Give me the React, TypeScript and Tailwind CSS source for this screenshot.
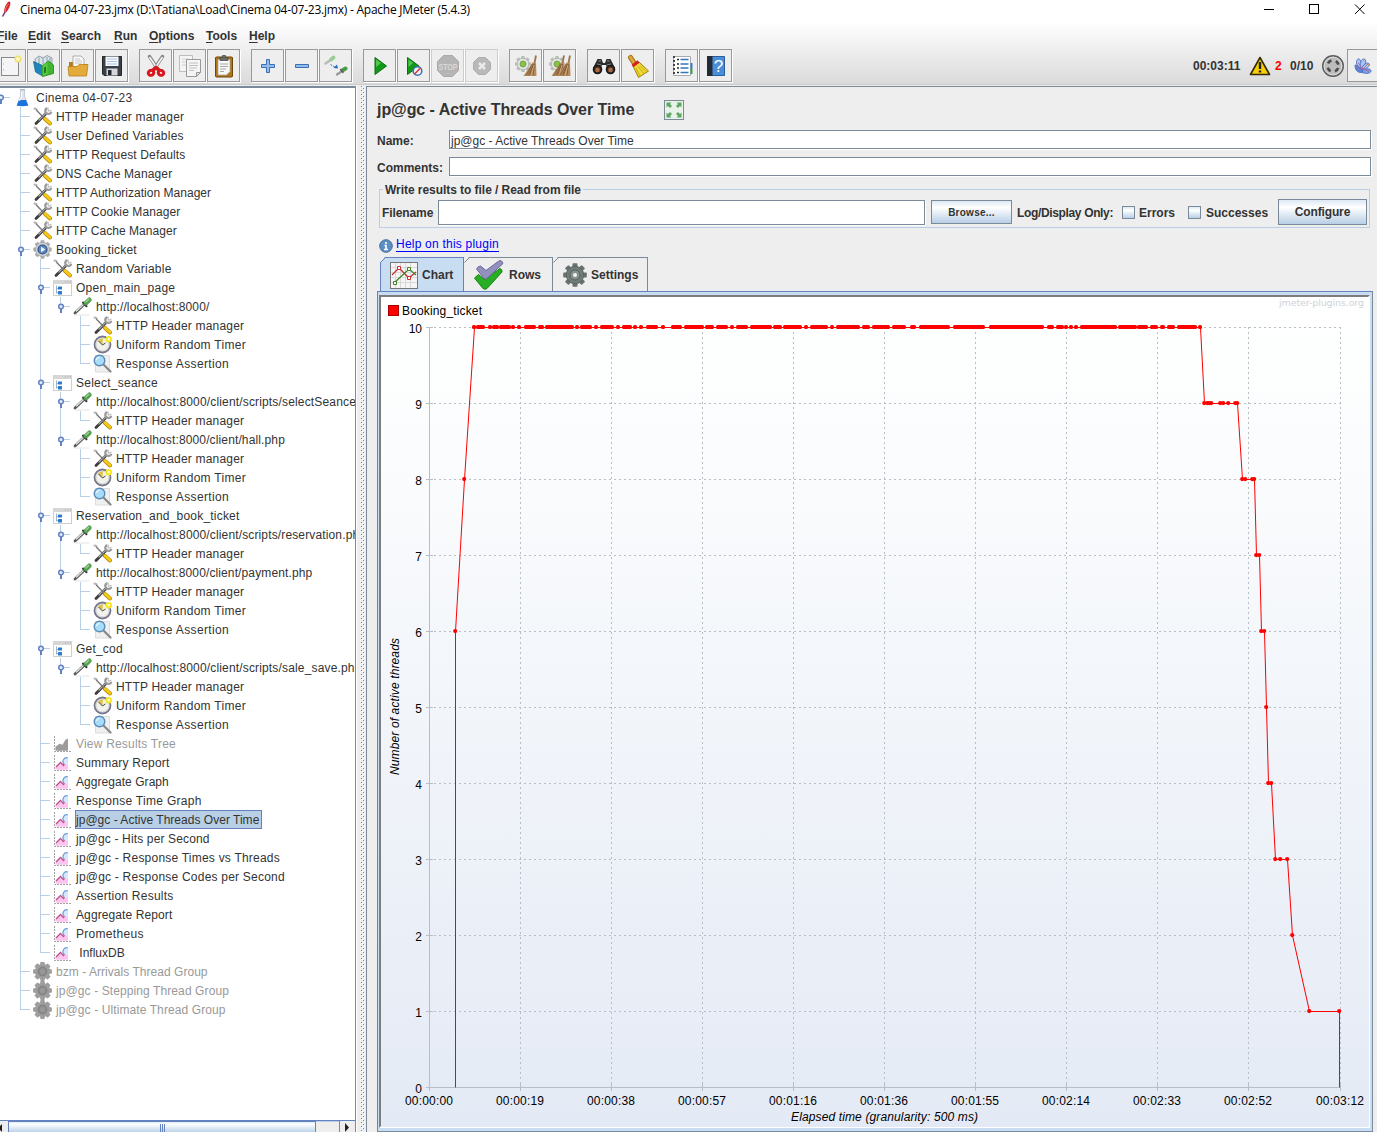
import React from "react";

type IconName = "flask" | "tools" | "gear" | "controller" | "sampler" | "timer" | "assertion" | "listener" | "listenerOff" | "gearOff";
type Row = [depth: number, icon: IconName, label: string, tracking?: string];

const rows: Row[] = [
  [0, "flask", "Cinema 04-07-23", "tracking-[0.25px]"],
  [1, "tools", "HTTP Header manager"],
  [1, "tools", "User Defined Variables", "tracking-[0.24px]"],
  [1, "tools", "HTTP Request Defaults", "tracking-[0.14px]"],
  [1, "tools", "DNS Cache Manager", "tracking-[0.13px]"],
  [1, "tools", "HTTP Authorization Manager", "tracking-[0.02px]"],
  [1, "tools", "HTTP Cookie Manager", "tracking-[0.1px]"],
  [1, "tools", "HTTP Cache Manager", "tracking-[0.05px]"],
  [1, "gear", "Booking_ticket"],
  [2, "tools", "Random Variable", "tracking-[0.25px]"],
  [2, "controller", "Open_main_page", "tracking-[0.28px]"],
  [3, "sampler", "http://localhost:8000/", "tracking-[0.12px]"],
  [4, "tools", "HTTP Header manager"],
  [4, "timer", "Uniform Random Timer", "tracking-[0.3px]"],
  [4, "assertion", "Response Assertion", "tracking-[0.35px]"],
  [2, "controller", "Select_seance", "tracking-[0.25px]"],
  [3, "sampler", "http://localhost:8000/client/scripts/selectSeance.php", "tracking-[0.16px]"],
  [4, "tools", "HTTP Header manager"],
  [3, "sampler", "http://localhost:8000/client/hall.php", "tracking-[0.13px]"],
  [4, "tools", "HTTP Header manager"],
  [4, "timer", "Uniform Random Timer", "tracking-[0.3px]"],
  [4, "assertion", "Response Assertion", "tracking-[0.35px]"],
  [2, "controller", "Reservation_and_book_ticket"],
  [3, "sampler", "http://localhost:8000/client/scripts/reservation.php", "tracking-[0.14px]"],
  [4, "tools", "HTTP Header manager"],
  [3, "sampler", "http://localhost:8000/client/payment.php", "tracking-[0.12px]"],
  [4, "tools", "HTTP Header manager"],
  [4, "timer", "Uniform Random Timer", "tracking-[0.3px]"],
  [4, "assertion", "Response Assertion", "tracking-[0.35px]"],
  [2, "controller", "Get_cod"],
  [3, "sampler", "http://localhost:8000/client/scripts/sale_save.php", "tracking-[0.16px]"],
  [4, "tools", "HTTP Header manager"],
  [4, "timer", "Uniform Random Timer", "tracking-[0.3px]"],
  [4, "assertion", "Response Assertion", "tracking-[0.35px]"],
  [2, "listenerOff", "View Results Tree"],
  [2, "listener", "Summary Report"],
  [2, "listener", "Aggregate Graph", "tracking-[0.05px]"],
  [2, "listener", "Response Time Graph", "tracking-[0.3px]"],
  [2, "listener", "jp@gc - Active Threads Over Time", "tracking-[0.02px]"],
  [2, "listener", "jp@gc - Hits per Second", "tracking-[0.15px]"],
  [2, "listener", "jp@gc - Response Times vs Threads", "tracking-[0.22px]"],
  [2, "listener", "jp@gc - Response Codes per Second", "tracking-[0.22px]"],
  [2, "listener", "Assertion Results", "tracking-[0.25px]"],
  [2, "listener", "Aggregate Report", "tracking-[0.1px]"],
  [2, "listener", "Prometheus", "tracking-[0.3px]"],
  [2, "listener", "\u00a0InfluxDB", "tracking-[0px]"],
  [1, "gearOff", "bzm - Arrivals Thread Group", "tracking-[0.04px]"],
  [1, "gearOff", "jp@gc - Stepping Thread Group", "tracking-[0.1px]"],
  [1, "gearOff", "jp@gc - Ultimate Thread Group", "tracking-[0.1px]"],
];

const SELECTED = 38;

function hasLaterSibling(index: number, level: number) {
  for (let i = index + 1; i < rows.length; i++) {
    if (rows[i][0] === level) return true;
    if (rows[i][0] < level) return false;
  }
  return false;
}

function Teeth({ r, w, h, fill }: { r: number; w: number; h: number; fill: string }) {
  return (
    <g fill={fill}>
      {[0, 45, 90, 135, 180, 225, 270, 315].map((a) => (
        <rect key={a} x={-w / 2} y={-r} width={w} height={h} rx={0.8} transform={`rotate(${a})`} />
      ))}
    </g>
  );
}

function TreeIcon({ name }: { name: IconName }) {
  return (
    <svg width="20" height="19" viewBox="0 0 20 19" className="block">
      {name === "flask" && (
        <g>
          <path d="M7.500 2h4v6l3.500 9.500H4L7.500 8z" fill="#dfe6ee" stroke="#b9c4d0" strokeWidth=".8" />
          <path d="M6 12h7l2.300 5.500q-5.800 1.500-11.600 0z" fill="#1b74dd" />
          <path d="M7 1.500h5" stroke="#aab4bf" />
          <path d="M8.500 4v5l-2 4" stroke="#fff" fill="none" />
        </g>
      )}
      {name === "tools" && (
        <g fill="none" strokeLinecap="round">
          <path d="M3 16.500L12.500 7" stroke="#3c3c3c" strokeWidth="2.800" />
          <path d="M6 13L12.500 6.500" stroke="#a8a8a8" strokeWidth="1.300" />
          <path d="M13.500 1.500c-1.800 1.300-1.500 3.800 0 4.800s3.500.8 4.500-.7" stroke="#9a9a9a" strokeWidth="2.300" />
          <path d="M15.200 1v3M18 3.200l-2.300 1" stroke="#bdbdbd" strokeWidth="1.200" />
          <path d="M1.500 1.500l2 .8" stroke="#b5b5b5" strokeWidth="2" />
          <path d="M3.500 3.300L11 11" stroke="#777" strokeWidth="1.300" />
          <path d="M12 12l5 4.500" stroke="#b48a00" strokeWidth="3.900" />
          <path d="M12 11.800l5 4.500" stroke="#f8c818" strokeWidth="2.600" />
        </g>
      )}
      {name === "gear" && (
        <g transform="translate(9.500 9.500)">
          <Teeth r={9.2} w={4} h={4} fill="#acacac" />
          <circle r="7" fill="#d3d5d8" stroke="#9b9fa4" strokeWidth=".8" />
          <circle r="4.500" fill="#5c86bb" stroke="#2d4f80" strokeWidth="1.200" />
          <path d="M-1.500-2.800L3 0l-4.500 2.800z" fill="#e8f1fb" />
        </g>
      )}
      {name === "gearOff" && (
        <g transform="translate(9.500 9.500)">
          <Teeth r={9.4} w={4.6} h={4} fill="#9e9e9e" />
          <circle r="7.600" fill="#9e9e9e" />
          <circle r="4.400" fill="#8c8c8c" stroke="#7a7a7a" strokeWidth=".8" />
          <circle r="2.400" fill="#999" />
        </g>
      )}
      {name === "controller" && (
        <g>
          <rect x=".5" y="2.500" width="18" height="15" fill="#fff" stroke="#cfcfcf" />
          <rect x="0" y="2" width="19" height="4" fill="#d6d6d6" />
          <path d="M12 4h1M14.500 4h1M17 4h1" stroke="#aaa" />
          <path d="M3.500 7.500v8M3.500 10.500h2M3.500 14.500h2" stroke="#9fb3c8" fill="none" />
          <rect x="5" y="8.500" width="4" height="3" rx=".5" fill="#2c7bd2" />
          <rect x="5" y="13" width="4" height="3.500" rx=".5" fill="#2c7bd2" />
        </g>
      )}
      {name === "sampler" && (
        <g strokeLinecap="round">
          <path d="M2 16L11 7.500" stroke="#5a5a5a" strokeWidth="2.800" />
          <path d="M3.500 14L11 7" stroke="#dfe4e1" strokeWidth="1.300" />
          <path d="M10 5.500l3.500 3.800" stroke="#333" strokeWidth="2" />
          <path d="M13 6L16.300 2.800" stroke="#55a04e" strokeWidth="4.600" />
          <path d="M13 5L15.800 2.300" stroke="#9ad193" strokeWidth="1.400" />
          <path d="M2 18h14" stroke="#ddd" strokeWidth=".8" />
        </g>
      )}
      {name === "timer" && (
        <g>
          <circle cx="9.500" cy="9.500" r="8" fill="#eeeee6" stroke="#77778f" strokeWidth="1.800" />
          <circle cx="9.500" cy="9.500" r="6.400" fill="#f2f2ec" stroke="#bbb" strokeWidth=".5" />
          <path d="M9.500 9.500L5 5.500A6 6 0 0 1 10 3.500z" fill="#dfc44a" />
          <path d="M5.500 6l4 4M9.500 10L12.500 8" stroke="#444" />
          <circle cx="15.800" cy="4.200" r="2.300" fill="#fffbc0" stroke="#f6e71c" strokeWidth="1.800" />
        </g>
      )}
      {name === "assertion" && (
        <g>
          <path d="M2.500 1.500h14v16.500h-14z" fill="#f0f0f0" stroke="#dcdcdc" />
          <path d="M11 11l6.500 6.500" stroke="#888" strokeWidth="2.200" strokeLinecap="round" />
          <circle cx="6.500" cy="6.500" r="5.300" fill="#a8dcf7" stroke="#5a8cbb" strokeWidth="1.400" />
          <path d="M3.500 6a3 3 0 0 1 3-2.700" stroke="#fff" fill="none" />
        </g>
      )}
      {(name === "listener" || name === "listenerOff") && (
        <g>
          <path d="M1.500 2v15.500H18" fill="none" stroke="#999" strokeWidth=".9" strokeDasharray="2 1" />
          {name === "listener" ? (
            <g>
              <path d="M2.500 16.800v-3l4.500-4 4 3 4-2v6z" fill="#fcc4ee" />
              <path d="M3 14l4.500-4.500 3 3L13.500 9" fill="none" stroke="#c0508b" strokeWidth="1.300" />
              <path d="M15 5c-4-1.500-6.500 3.500-4 6 1.500 1.200 3.500.5 4-1z" fill="#d5e8ff" />
              <path d="M15 5c-4-1.500-6.500 3.500-4 6" fill="none" stroke="#6e9fd7" strokeWidth="1.200" />
            </g>
          ) : (
            <path d="M2.500 16.800v-4l4-3 3 1 3-5 2.500-1.300v12.300z" fill="#9c9c9c" />
          )}
        </g>
      )}
    </svg>
  );
}

function Guide({ top, bottom, arm, knob }: { top: boolean; bottom: boolean; arm: boolean; knob: boolean }) {
  return (
    <svg width="20" height="19" viewBox="0 0 20 19" className="block shrink-0">
      <g stroke="#b8cfe5" shapeRendering="crispEdges">
        {top && <path d="M7.500 0v10" />}
        {bottom && <path d="M7.500 9v10" />}
        {arm && <path d="M7 9.500h10" />}
      </g>
      {knob && (
        <g>
          <path d="M8 11v5" stroke="#6382bf" strokeWidth="2" />
          <circle cx="8" cy="9.500" r="2.300" fill="#e4edf7" stroke="#6382bf" strokeWidth="1.500" />
        </g>
      )}
    </svg>
  );
}

function Tree() {
  return (
    <div className="-ml-[7px] text-[12px] text-[#333]">
      {rows.map(([depth, icon, label, tracking], i) => {
        const expandable = i + 1 < rows.length && rows[i + 1][0] > depth;
        return (
          <div key={i} className="flex h-[19px] items-center">
            {Array.from({ length: depth + 1 }, (_, level) => {
              const own = level === depth;
              const more = level > 0 && hasLaterSibling(i, level);
              return <Guide key={level} top={level > 0 && (own || more)} bottom={more} arm={own} knob={own && expandable} />;
            })}
            <div className="w-[22px] shrink-0"><TreeIcon name={icon} /></div>
            <span
              className={
                "h-[19px] border pr-[2px] leading-[18px] whitespace-pre " +
                (tracking ?? "tracking-[0.2px]") +
                (i === SELECTED ? " border-[#6382bf] bg-[#b8cfe5]" : " border-transparent") +
                (icon === "gearOff" || icon === "listenerOff" ? " text-[#999]" : "")
              }
            >
              {label}
            </span>
          </div>
        );
      })}
    </div>
  );
}

function Tool({ children, off }: { children?: React.ReactNode; off?: boolean }) {
  return (
    <div
      className={
        "flex h-[33px] w-[33px] shrink-0 items-center justify-center border bg-[#eeeeee] shadow-[1px_1px_0_#fff] " +
        (off ? "border-[#cccccc]" : "border-[#999999]")
      }
    >
      <svg width="24" height="24" viewBox="0 0 24 24">{children}</svg>
    </div>
  );
}

function Broom({ x }: { x: number }) {
  return (
    <g transform={`translate(${x} 0)`}>
      <path d="M11 1.500L9.500 9" stroke="#9b7446" strokeWidth="1.800" />
      <path d="M7.500 8.500l3.500.5.500 13H-1.500z" fill="#b58b5e" />
      <path d="M7.500 10L1 21.500M8.500 10L4.500 21.500M9.500 10l-1.500 11.500M8 12l-5 9" stroke="#7d5730" strokeWidth=".8" />
      <path d="M9 11L6 21.500" stroke="#d9b98f" strokeWidth=".7" />
    </g>
  );
}

function MiniGear() {
  return (
    <g transform="translate(9 10)">
      <Teeth r={8} w={3.6} h={4} fill="#bcbfbc" />
      <circle r="5.800" fill="#e2e5e2" stroke="#a8aca8" strokeWidth=".8" />
      <circle r="3" fill="#86c440" stroke="#7aa050" />
    </g>
  );
}

function Toolbar() {
  return (
    <div className="flex h-[35px] items-start">
      <div className="-ml-[7px] flex gap-px">
        <Tool>
          <rect x="3.500" y="3.500" width="17" height="18" fill="#f5f5f7" stroke="#888" />
          <path d="M5.500 9v2M5.500 15v2" stroke="#ccc" />
          <circle cx="20" cy="5" r="2.800" fill="#fff9c0" stroke="#f0e070" strokeWidth="1.500" />
        </Tool>
        <Tool>
          <path d="M3 5l4-3 4 2 4-2.500 5 2.500v9H4z" fill="#dbe6ec" stroke="#778a94" strokeWidth=".8" />
          <path d="M7 3.500v7M11 4v6M15 3v6M18 4v5" stroke="#778a94" strokeWidth=".8" />
          <path d="M1.500 7.500l9 4v10.500l-7-4z" fill="#1d86bd" stroke="#0e5e88" strokeWidth=".7" />
          <path d="M10.500 11.500l6-4.500 5 4v8.500l-11 3z" fill="#3fb62f" stroke="#24801a" strokeWidth=".8" />
          <path d="M10.500 12l5-4v12l-5 2z" fill="#59cc46" />
          <path d="M12 13.500l2-1v6l-2 1z" fill="#1f7a18" />
        </Tool>
        <Tool>
          <path d="M3 8h6l1.500 2H21v11H3z" fill="#b77b16" />
          <path d="M7 2h8l3 3v8H7z" fill="#fafafa" stroke="#999" strokeWidth=".8" />
          <path d="M9 5h5M9 7h7M9 9h7" stroke="#b7b7b7" strokeWidth=".8" />
          <path d="M2 12.500h9l2-2h9L20.500 22H3z" fill="#e3ab3c" stroke="#b98118" strokeWidth=".8" />
        </Tool>
        <Tool>
          <path d="M2.500 2.500h19v19H4l-1.500-1.500z" fill="#3b3f46" stroke="#22252a" />
          <rect x="5.500" y="2.500" width="13" height="9.500" fill="#f7faff" />
          <path d="M7 5h10M7 7.500h10M7 10h10" stroke="#a9c3e6" />
          <rect x="6.500" y="14.500" width="11" height="7" fill="#d5d7da" />
          <rect x="8" y="16" width="3.500" height="5" fill="#23262b" />
        </Tool>
      </div>
      <div className="ml-[11px] flex gap-px">
        <Tool>
          <path d="M5.500 2.500l8.500 13M18.500 2.500l-8.500 13" stroke="#858585" strokeWidth="3.400" strokeLinecap="round" />
          <path d="M5.500 3l8 12M18.500 3l-8 12" stroke="#eee" strokeWidth="1.700" />
          <path d="M9 16l3-2.500 3 2.500" stroke="#d8161b" strokeWidth="3.500" fill="none" />
          <ellipse cx="7" cy="18.800" rx="2.800" ry="2.500" fill="#eee" stroke="#d8161b" strokeWidth="3" transform="rotate(-25 7 18.800)" />
          <ellipse cx="17" cy="18.800" rx="2.800" ry="2.500" fill="#eee" stroke="#d8161b" strokeWidth="3" transform="rotate(25 17 18.800)" />
        </Tool>
        <Tool>
          <path d="M1.500 1.500h13v16h-13z" fill="#f5f5f5" stroke="#bdbdbd" />
          <path d="M4 5h6M4 8h4M4 11h4" stroke="#d0d0d0" />
          <path d="M8.500 5.500h14v13l-4 4h-10z" fill="#f5f5f5" stroke="#999" />
          <path d="M11 9h9M11 11.500h9M11 14h8M11 16.500h5" stroke="#c0c0c0" />
          <path d="M22.500 18.500h-4v4z" fill="#ddd" stroke="#999" />
        </Tool>
        <Tool>
          <rect x="3.500" y="3" width="17" height="20" rx="1" fill="#b0741d" stroke="#704609" />
          <path d="M6 5.500h12v12l-3.500 3.500H6z" fill="#f8f8f8" stroke="#aaa" strokeWidth=".8" />
          <path d="M8 10h8M8 12.500h8M8 15h6M8 17.500h4" stroke="#a8a8a8" />
          <path d="M8 6.500V3.500h2.500V1.500h3v2H16v3z" fill="#696c66" stroke="#444" strokeWidth=".7" />
        </Tool>
      </div>
      <div className="ml-[11px] flex gap-px">
        <Tool>
          <path d="M10.500 5.500h3v5h5v3h-5v5h-3v-5h-5v-3h5z" fill="#92bdea" stroke="#3a6fb8" />
        </Tool>
        <Tool>
          <path d="M5.500 10.500h13v3h-13z" fill="#92bdea" stroke="#3a6fb8" />
        </Tool>
        <Tool>
          <g strokeLinecap="round">
            <path d="M1.500 9.500L6 6.500" stroke="#b5bdb7" strokeWidth="2.400" />
            <path d="M7 5.500L9.500 3.500" stroke="#9acb95" strokeWidth="3.800" />
            <path d="M13 20.500L17.500 17.500" stroke="#959f98" strokeWidth="2.400" />
            <path d="M19 16L21.500 14.500" stroke="#4a9a45" strokeWidth="4" />
            <path d="M16.500 15.500l2.500 3" stroke="#555" strokeWidth="1.300" />
          </g>
          <path d="M6.500 10.500l5 3" stroke="#3c7ad0" strokeDasharray="2 1" />
          <path d="M14 14.500l-4.500-.5 3.500-3.500z" fill="#2468c8" />
        </Tool>
      </div>
      <div className="ml-[11px] flex gap-px">
        <Tool>
          <path d="M7 3.500L18.500 12 7 20.500z" fill="#109a18" stroke="#0c6e12" />
          <path d="M8 5.500L13 9 8 13z" fill="#53c650" />
        </Tool>
        <Tool>
          <path d="M5.500 3.500L17 12 5.500 20.500z" fill="#109a18" stroke="#0c6e12" />
          <path d="M6.500 5.500L11 9 6.500 13z" fill="#53c650" />
          <circle cx="15.500" cy="17" r="4.300" fill="#eef4fb" stroke="#386fae" strokeWidth="1.500" />
          <path d="M12.500 20l6-6" stroke="#e03a34" strokeWidth="1.600" />
        </Tool>
        <Tool off>
          <path d="M7.500 1.500h9l6 6v9l-6 6h-9l-6-6v-9z" fill="#b5b5b5" stroke="#ababab" />
          <text x="12" y="15.500" textAnchor="middle" fontSize="9" fontWeight="700" fill="#d8d8d8" textLength="19" lengthAdjust="spacingAndGlyphs">STOP</text>
        </Tool>
        <Tool off>
          <path d="M8.500 3.500h7l5 5v7l-5 5h-7l-5-5v-7z" fill="#b9b9b9" stroke="#adadad" />
          <path d="M9 9l6 6M15 9l-6 6" stroke="#e9e9e9" strokeWidth="2.600" />
        </Tool>
      </div>
      <div className="ml-[11px] flex gap-px">
        <Tool><MiniGear /><Broom x={11} /></Tool>
        <Tool><MiniGear /><Broom x={5} /><Broom x={11} /></Tool>
      </div>
      <div className="ml-[11px] flex gap-px">
        <Tool>
          <path d="M5.500 5h4l1.500 4h2l1.500-4h4L23 14l-7 2-2-5h-4l-2 5-7-2z" fill="#2c2c2c" />
          <path d="M6.500 7h2.500M15 7h2.500M5 10l4 1M19 10l-4 1" stroke="#8a8a8a" strokeWidth="1.200" />
          <circle cx="5.500" cy="15.500" r="4" fill="#4a3020" stroke="#181818" strokeWidth="1.600" />
          <circle cx="18.500" cy="15.500" r="4" fill="#4a3020" stroke="#181818" strokeWidth="1.600" />
          <circle cx="5.500" cy="16" r="2.200" fill="#b06c42" />
          <circle cx="18.500" cy="16" r="2.200" fill="#b06c42" />
        </Tool>
        <Tool>
          <path d="M4.500 3.500l4 6" stroke="#ad7816" strokeWidth="5" strokeLinecap="round" />
          <path d="M4.500 3.500l4 6" stroke="#dda644" strokeWidth="3" strokeLinecap="round" />
          <path d="M7 12l6-4 9.500 9-10 6.500z" fill="#f1d936" stroke="#9e7e09" />
          <path d="M10 14l4 8M12 12.500l6 7M14 11.500l6 6" stroke="#bb9e15" strokeWidth=".8" />
          <path d="M6.500 12l6-4.500" stroke="#d32020" strokeWidth="3" />
        </Tool>
      </div>
      <div className="ml-[11px] flex gap-px">
        <Tool>
          <path d="M3.500 2.500h17v19h-17z" fill="#fff" stroke="#aaa" />
          <path d="M4 2v20" stroke="#444" strokeWidth="2" strokeDasharray="2 2" />
          <path d="M7 5.500h2M7 10h2M7 14h2M7 18.500h2" stroke="#222" strokeWidth="1.300" />
          <path d="M10.500 5.500h8M10.500 10h8M10.500 14h8M10.500 18.500h8" stroke="#3575bd" strokeWidth="1.300" />
          <path d="M21.500 9v6" stroke="#3b7ecb" strokeWidth="2" />
          <path d="M21.500 15v5" stroke="#33a849" strokeWidth="2" />
        </Tool>
        <Tool>
          <path d="M3.500 2.500h17v19h-17z" fill="#4a8dd8" stroke="#2a5d9b" />
          <path d="M3 2h5.500v20H3z" fill="#222b36" />
          <text x="14.500" y="18" textAnchor="middle" fontSize="17" fill="#fff">?</text>
        </Tool>
      </div>
      <div className="ml-auto flex h-[33px] items-center pt-px text-[12px] font-bold text-[#333]">
        <span className="w-[56px]">00:03:11</span>
        <svg width="22" height="20" viewBox="0 0 22 20">
          <path d="M11 1.500L20.500 18.500h-19z" fill="#f8ce0c" stroke="#332b00" strokeWidth="1.600" strokeLinejoin="round" />
          <path d="M11 6v7M11 14.500v2" stroke="#222" strokeWidth="2.400" />
        </svg>
        <span className="ml-[4px] w-[15px] text-[#f00]">2</span>
        <span className="w-[30px]">0/10</span>
        <svg width="24" height="24" viewBox="0 0 24 24">
          <circle cx="13" cy="12" r="10.300" fill="#bcbcbc" stroke="#5c5c5c" strokeWidth="1.400" />
          <circle cx="13" cy="12" r="8.800" fill="none" stroke="#dcdcdc" />
          <circle cx="13" cy="12" r="5.600" fill="none" stroke="#4b4b4b" strokeWidth="2.600" strokeDasharray="4.300 4.500" strokeDashoffset="-2.200" />
        </svg>
        <div className="mt-[-1px] ml-[3px] flex h-[33px] w-[30px] items-center border border-r-0 border-[#999] bg-[#eee] pl-[5px]">
          <svg width="20" height="20" viewBox="0 0 20 20" stroke="#416bc1" strokeWidth=".8" fill="#a9c1ef">
            <path d="M8 14C2 9 3 4 5 3s5 4 4 11z" />
            <path d="M8 14C6 7 8 3 11 3s2 6-2 11z" />
            <path d="M8 14c2-6 6-8 8-6.500s-2 6-8 6.500z" />
            <path d="M8 15c4-3 10-3 10 0s-7 3-10 1z" fill="#7f9fe2" />
            <path d="M2 9c2 0 6 3 8 7-4 1.500-8-.5-8-7z" fill="#5d85d8" />
            <path d="M5 7l5 6 6 2M4 11l6 2 5-5" stroke="#bc5a83" fill="none" />
            <circle cx="10.500" cy="4" r=".8" fill="#d89a3c" stroke="none" />
            <circle cx="15.500" cy="8.500" r=".8" fill="#d89a3c" stroke="none" />
          </svg>
        </div>
      </div>
    </div>
  );
}

const menus = [
  { label: "File", cls: "w-[31px] -ml-[3px]" },
  { label: "Edit", cls: "w-[33px]" },
  { label: "Search", cls: "w-[53px]" },
  { label: "Run", cls: "w-[35px]" },
  { label: "Options", cls: "w-[57px]" },
  { label: "Tools", cls: "w-[43px]" },
  { label: "Help", cls: "w-[40px]" },
];

const gridX = [429, 520, 611, 702, 793, 884, 975, 1066, 1157, 1248, 1340];
const times = ["00:00:00", "00:00:19", "00:00:38", "00:00:57", "00:01:16", "00:01:36", "00:01:55", "00:02:14", "00:02:33", "00:02:52", "00:03:12"];
const yOf = (v: number) => 1087.5 - 76 * v;

const series: [number, number][] = [
  [455, 0], [455, 6], [464, 8], [474, 10], [1200, 10], [1204, 9], [1237, 9], [1242, 8], [1254, 8], [1256, 7], [1259, 7],
  [1261, 6], [1264, 6], [1266, 5], [1268, 4], [1271, 4], [1275, 3], [1287, 3], [1292, 2], [1309, 1], [1339, 1], [1339, 0],
];

const dots: [number, number][] = [
  [455, 6], [464, 8], [1204, 9], [1207, 9], [1209, 9], [1211, 9], [1220, 9], [1223, 9], [1228, 9], [1235, 9], [1237, 9],
  [1242, 8], [1245, 8], [1252, 8], [1254, 8], [1256, 7], [1259, 7], [1261, 6], [1264, 6], [1266, 5], [1268, 4], [1271, 4],
  [1275, 3], [1280, 3], [1287, 3], [1292, 2], [1309, 1], [1339, 1],
];

const runs: [number, number][] = [
  [474, 474], [478, 483], [490, 490], [494, 497], [501, 509], [513, 513], [519, 519], [526, 534], [540, 542], [547, 572], [577, 577],
  [582, 590], [596, 596], [602, 612], [618, 618], [624, 630], [635, 635], [641, 641], [648, 656], [663, 663], [673, 680], [686, 702],
  [707, 712], [718, 726], [732, 732], [738, 746], [752, 770], [775, 780], [785, 800], [806, 806], [812, 826], [832, 832], [838, 858],
  [864, 868], [874, 888], [894, 904], [912, 914], [921, 948], [955, 983], [991, 1042], [1049, 1052], [1058, 1062], [1066, 1066],
  [1071, 1071], [1076, 1076], [1082, 1115], [1120, 1135], [1139, 1146], [1152, 1156], [1162, 1163], [1169, 1173], [1179, 1195], [1200, 1200],
];

function Chart() {
  return (
    <svg width="988" height="830" viewBox="381 297 988 830" className="block font-normal">
      <defs>
        <linearGradient id="plotBg" x1="0" y1="0" x2="0" y2="1">
          <stop offset="0" stopColor="#ffffff" />
          <stop offset=".1" stopColor="#fdfefe" />
          <stop offset="1" stopColor="#e4eaf5" />
        </linearGradient>
      </defs>
      <rect x="381" y="297" width="988" height="830" fill="url(#plotBg)" />
      <rect x="388.500" y="305.500" width="10" height="10" fill="#f00" stroke="#a00" />
      <text x="402" y="315" fontSize="12" textLength="80">Booking_ticket</text>
      <text x="1279" y="306" fontSize="9.500" fill="#cfd2da" textLength="85" fontFamily="DejaVu Sans, sans-serif">jmeter-plugins.org</text>
      <g stroke="#b8bec8" shapeRendering="crispEdges">
        {gridX.slice(1).map((x) => <path key={x} d={`M${x + 0.5} 327v760`} strokeDasharray="2 3" />)}
        {Array.from({ length: 10 }, (_, i) => <path key={i} d={`M429 ${yOf(i + 1)}h911`} strokeDasharray="2 3" />)}
        {gridX.map((x) => <path key={x} d={`M${x + 0.5} 1084v7`} />)}
        {Array.from({ length: 11 }, (_, i) => <path key={i} d={`M426 ${yOf(i)}h7`} />)}
        <path d="M429.500 327v764M426 1087.500h914" />
      </g>
      <polyline points={series.map(([x, v]) => `${x + 0.5},${yOf(v)}`).join(" ")} fill="none" stroke="#f00" />
      <g fill="#f00">
        {dots.map(([x, v]) => <circle key={`${x}-${v}`} cx={x + 0.2} cy={yOf(v) - 0.4} r="2.100" />)}
        {runs.map(([a, b]) => <rect key={a} x={a - 2} y="325" width={b - a + 4} height="4" rx="1.500" />)}
      </g>
      <g fontSize="12" fill="#000">
        {times.map((t, i) => <text key={t} x={gridX[i] - 24} y="1105" textLength="48">{t}</text>)}
        {Array.from({ length: 11 }, (_, i) => <text key={i} x="422" y={yOf(i) + 5} textAnchor="end">{i}</text>)}
        <text x="791" y="1121" fontStyle="italic" textLength="187">Elapsed time (granularity: 500 ms)</text>
        <text transform="translate(399 775) rotate(-90)" fontStyle="italic" textLength="137">Number of active threads</text>
      </g>
    </svg>
  );
}

function Field({ className, children }: { className: string; children?: React.ReactNode }) {
  return <div className={"border border-[#7a8a99] bg-white shadow-[1px_1px_0_#fff] " + className}>{children}</div>;
}

function Check() {
  return <div className="h-[13px] w-[13px] shrink-0 border border-[#7a8a99] bg-linear-to-b from-[#dde8f3] via-white via-30% to-[#b8cfe5]" />;
}

function Tab({ active, className, label, children }: { active?: boolean; className: string; label: string; children: React.ReactNode }) {
  return (
    <div className={"relative flex items-center border-t border-r pt-px " + (active ? "border-[#6382bf] bg-[#c8ddf2] " : "border-[#7a8a99] ") + className}>
      <svg width="7" height="34" viewBox="0 0 7 34" className="absolute -top-px left-0">
        <path d="M0 0h5L0 5z" fill="#eee" />
        {active && <path d="M.5 34V5" stroke="#6382bf" />}
        <path d="M.5 5.500L5.500 .5H7" stroke={active ? "#6382bf" : "#7a8a99"} fill="none" />
      </svg>
      {children}
      <span className="ml-[4px]">{label}</span>
    </div>
  );
}

export default function App() {
  return (
    <div className="flex h-[1132px] w-[1377px] flex-col overflow-hidden bg-[#eee] font-['Liberation_Sans',Arial,sans-serif]">
      <header className="h-[86px] shrink-0 bg-white">
        <div className="flex h-[22px] items-start pt-px font-['Open_Sans','Noto_Sans',sans-serif] text-[12px] text-black">
          <svg width="20" height="18" viewBox="0 0 20 18" className="shrink-0">
            <path d="M4 11C4 6 7.500 0 9.500 .5S10 7 6 11.500z" fill="#d4213d" />
            <path d="M5 11c0-3 1.500-6 3.500-8" stroke="#ee9b38" fill="none" />
            <path d="M2.500 15.500l2.500-4.500" stroke="#6e3073" strokeWidth="1.500" />
          </svg>
          <span className="tracking-[-0.23px] whitespace-nowrap">Cinema 04-07-23.jmx (D:\Tatiana\Load\Cinema 04-07-23.jmx) - Apache JMeter (5.4.3)</span>
          <svg width="114" height="18" viewBox="0 0 114 18" className="ml-auto" stroke="#000" fill="none">
            <path d="M1 8.500h10" shapeRendering="crispEdges" />
            <path d="M46.500 3.500h9v9h-9z" shapeRendering="crispEdges" />
            <path d="M92 3.500l9.500 9.500M101.500 3.500L92 13" />
          </svg>
        </div>
        <div className="h-[62px] bg-linear-to-b from-white to-[#dadada]">
          <nav className="flex h-[27px] items-center text-[12px] font-bold text-[#333]">
            {menus.map((m) => (
              <span key={m.label} className={m.cls}>
                <span className="underline underline-offset-2">{m.label[0]}</span>{m.label.slice(1)}
              </span>
            ))}
          </nav>
          <Toolbar />
        </div>
        <div className="h-[2px] border-t border-[#ccc] bg-[#eee]" />
      </header>

      <main className="flex min-h-0 flex-1">
        <aside className="flex w-[356px] flex-col border-t-2 border-r border-[#7a8a99] bg-white">
          <div className="min-h-0 flex-1 overflow-hidden"><Tree /></div>
          <div className="flex h-[12px] shrink-0 overflow-hidden border-t border-[#6382bf] bg-[#eee]">
            <svg width="8" height="12" viewBox="0 0 8 12"><path d="M2 3v8l-4-4z" fill="#222" /></svg>
            <div className="flex w-[308px] items-start justify-center gap-px border border-b-0 border-[#6382bf] bg-linear-to-b from-[#dce9f6] via-white via-20% to-[#bdd3e9] pt-[2px]">
              <div className="h-3 w-px bg-[#6382bf]" />
              <div className="h-3 w-px bg-[#6382bf]" />
              <div className="h-3 w-px bg-[#6382bf]" />
            </div>
            <div className="flex-1 border-t border-[#b8cfe5]" />
            <div className="w-[16px] border-l border-[#7a8a99]">
              <svg width="15" height="12" viewBox="0 0 15 12"><path d="M5 2v9l4-4.500z" fill="#222" /></svg>
            </div>
          </div>
        </aside>
        <div className="flex w-[10px] border-l border-white bg-[#eee] pl-[4px]">
          <svg width="5" height="1046" className="block" shapeRendering="crispEdges">
            <defs>
              <pattern id="grip" width="4" height="4" patternUnits="userSpaceOnUse">
                <rect x="0" y="0" width="1" height="1" fill="#7a8a99" />
                <rect x="2" y="2" width="1" height="1" fill="#7a8a99" />
                <rect x="1" y="1" width="1" height="1" fill="#fff" />
                <rect x="3" y="3" width="1" height="1" fill="#fff" />
              </pattern>
            </defs>
            <rect width="4" height="1046" fill="url(#grip)" />
          </svg>
        </div>

        <section className="flex min-w-0 flex-1 flex-col border-t border-l border-[#7a8a99] pl-[10px] text-[12px] font-bold text-[#333]">
          <div className="flex h-[43px] items-center pt-[3px]">
            <h1 className="w-[287px] pt-px text-[16px] tracking-[-0.06px] whitespace-nowrap">jp@gc - Active Threads Over Time</h1>
            <svg width="20" height="20" viewBox="0 0 20 20">
              <rect x=".5" y=".5" width="19" height="19" fill="#e9f2e9" stroke="#7a8a99" />
              <path d="M2.500 2.500h5L6 4l2 2-2 2-2-2-1.500 1.500zM17.500 2.500v5L16 6l-2 2-2-2 2-2-1.500-1.500zM2.500 17.500v-5L4 14l2-2 2 2-2 2 1.500 1.500zM17.500 17.500h-5L14 16l-2-2 2-2 2 2 1.500-1.500z" fill="#5ba663" />
            </svg>
          </div>
          <div className="flex h-[27px] items-start">
            <span className="w-[72px] pt-[3px] leading-[16px]">Name:</span>
            <Field className="h-[19px] w-[922px] pl-[1px] leading-[20px] font-normal">jp@gc - Active Threads Over Time</Field>
          </div>
          <div className="flex h-[27px] items-start">
            <span className="w-[72px] pt-[3px] leading-[16px]">Comments:</span>
            <Field className="h-[19px] w-[922px]" />
          </div>
          <div className="flex h-[52px] flex-col">
            <div className="relative mt-[6px] ml-[2px] h-[39px] w-[991px] border border-[#b8cfe5]">
              <span className="absolute -top-[7px] left-[3px] bg-[#eee] px-[2px] leading-[15px] tracking-[-0.05px]">Write results to file / Read from file</span>
              <div className="flex h-[37px] items-center pt-[7px] pl-[2px]">
                <span className="w-[56px] pt-px tracking-[-0.1px]">Filename</span>
                <Field className="h-[25px] w-[487px]" />
                <div className="ml-[6px] flex h-[24px] w-[81px] items-center justify-center border border-[#7a8a99] bg-linear-to-b from-[#dde8f3] via-white via-30% to-[#b8cfe5] text-[10px] tracking-[0.25px]">Browse...</div>
                <span className="ml-[5px] w-[105px] pt-px tracking-[-0.35px] whitespace-nowrap">Log/Display Only:</span>
                <Check />
                <span className="ml-[4px] w-[49px] pt-px">Errors</span>
                <Check />
                <span className="ml-[5px] w-[72px] pt-px">Successes</span>
                <div className="flex h-[26px] w-[89px] items-center justify-center border border-[#7a8a99] bg-linear-to-b from-[#dde8f3] via-white via-30% to-[#b8cfe5] tracking-[-0.15px]">Configure</div>
              </div>
            </div>
          </div>
          <div className="flex h-[22px] items-start pt-[3px] pl-[2px]">
            <svg width="14" height="14" viewBox="0 0 14 14" className="mt-px">
              <circle cx="7" cy="7" r="6.300" fill="#5b8fc4" stroke="#4a6d96" />
              <path d="M7 3v2M5.500 6.500H7V10M5 10.500h4" stroke="#fff" strokeWidth="1.600" fill="none" />
            </svg>
            <span className="ml-[3px] h-[14px] border-b border-[#00f] leading-[13px] font-normal tracking-[0.22px] text-[#00f]">Help on this plugin</span>
          </div>
          <div className="flex h-[34px] pl-[3px]">
            <Tab active className="w-[84px] pl-[10px]" label="Chart">
              <svg width="28" height="27" viewBox="0 0 28 27">
                <rect x=".5" y=".5" width="27" height="26" fill="#f5f5f5" stroke="#777" />
                <path d="M5.500 1v25M10.500 1v25M15.500 1v25M20.500 1v25M1 5.500h26M1 10.500h26M1 15.500h26M1 20.500h26" stroke="#d8d8d8" />
                <path d="M2 13l7-7 10 10 7-6" stroke="#c83232" fill="none" strokeWidth="1.300" />
                <path d="M4 21L19 7l7 6" stroke="#3f8423" fill="none" strokeWidth="1.300" />
                <path d="M7.500 4.500h3v3h-3zM17.500 14.500h3v3h-3z" fill="#fff" stroke="#c83232" />
                <path d="M3.500 19.500h3v3h-3zM17.500 5.500h3v3h-3z" fill="#fff" stroke="#3f8423" />
              </svg>
            </Tab>
            <Tab className="w-[89px] pl-[9px]" label="Rows">
              <svg width="32" height="32" viewBox="0 0 32 32" strokeLinejoin="round">
                <path d="M1.500 19l4-3.500 6 5L27 9.500q2.500 1 2 3.500L14 29.500q-2 1.500-4 0z" fill="#27ae22" stroke="#15830f" />
                <path d="M3.500 10q1.500-3 4-3l5.500 4.500L26.500 1.500q3 0 3.500 3L14 19.500q-1.500 1-3 0z" fill="#9290bd" stroke="#6c6a9e" />
              </svg>
            </Tab>
            <Tab className="w-[95px] pl-[10px]" label="Settings">
              <svg width="24" height="24" viewBox="-12 -12 24 24">
                <Teeth r={11.8} w={5} h={6} fill="#667270" />
                <circle r="8.700" fill="#707c79" stroke="#5c6765" />
                <circle r="5" fill="#87928f" stroke="#56605e" />
                <circle r="2" fill="#f4f4f4" />
              </svg>
            </Tab>
          </div>
          <div className="w-[996px] border border-[#6382bf] border-r-[#7a8a99] border-b-[#7a8a99] bg-[#c8ddf2] pt-[3px] pr-[3px] pb-[3px] pl-[1px]">
            <div className="h-[833px] w-[991px] border-t-2 border-r-2 border-b-2 border-l-2 border-t-[#7d7d7d] border-r-white border-b-white border-l-[#7d7d7d]"><Chart /></div>
          </div>
        </section>
      </main>
    </div>
  );
}
